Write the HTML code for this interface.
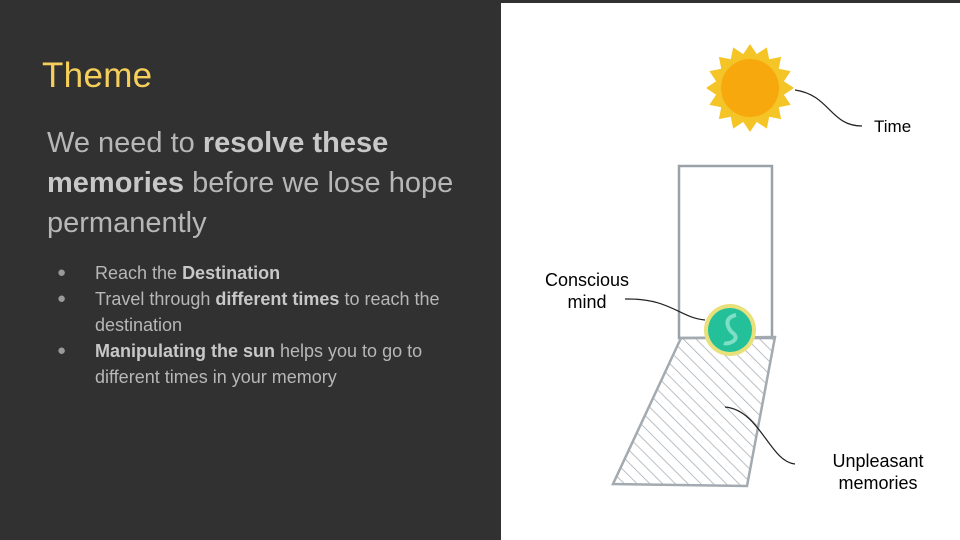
<!DOCTYPE html>
<html><head><meta charset="utf-8"><style>
html,body{margin:0;padding:0}
body{width:960px;height:540px;position:relative;overflow:hidden;background:#fff;font-family:"Liberation Sans",sans-serif}
.left{position:absolute;left:0;top:0;width:501px;height:540px;background:#313131}
.top{position:absolute;left:0;top:0;width:960px;height:3px;background:#313131}
h1{position:absolute;left:42px;top:56px;margin:0;font-weight:normal;font-size:35px;color:#f6cf5a;letter-spacing:0.3px}
.big{position:absolute;left:47px;top:123px;width:450px;font-size:29px;line-height:40px;color:#b7b7b7}
.big b{color:#c8c8c8}
ul{position:absolute;left:47px;top:260px;margin:0;padding:0;list-style:none;width:420px;font-size:18px;line-height:26px;color:#b7b7b7}
li{position:relative;padding-left:48px}
li:before{content:"●";position:absolute;left:10px;font-size:15px;color:#9a9a9a}
li b{color:#c8c8c8}
.lbl{position:absolute;font-size:17px;line-height:22px;color:#000;text-align:center}
</style></head><body>
<div class="left"></div><div class="top"></div>
<h1>Theme</h1>
<div class="big">We need to <b>resolve these memories</b> before we lose hope permanently</div>
<ul>
<li>Reach the <b>Destination</b></li>
<li>Travel through <b>different times</b> to reach the destination</li>
<li><b>Manipulating the sun</b> helps you to go to different times in your memory</li>
</ul>
<svg style="position:absolute;left:0;top:0" width="960" height="540">
<defs>
<pattern id="h" width="9" height="9" patternUnits="userSpaceOnUse" patternTransform="rotate(-45)">
<line x1="0" y1="0" x2="0" y2="9" stroke="#a9b0b6" stroke-width="1.6"/>
</pattern>
</defs>
<g transform="translate(750,88)" fill="#f5c426">
<circle r="34"/>
<polygon points="0,-44 -10,-29 10,-29"/>
<polygon points="0,-44 -10,-29 10,-29" transform="rotate(22.5)"/>
<polygon points="0,-44 -10,-29 10,-29" transform="rotate(45)"/>
<polygon points="0,-44 -10,-29 10,-29" transform="rotate(67.5)"/>
<polygon points="0,-44 -10,-29 10,-29" transform="rotate(90)"/>
<polygon points="0,-44 -10,-29 10,-29" transform="rotate(112.5)"/>
<polygon points="0,-44 -10,-29 10,-29" transform="rotate(135)"/>
<polygon points="0,-44 -10,-29 10,-29" transform="rotate(157.5)"/>
<polygon points="0,-44 -10,-29 10,-29" transform="rotate(180)"/>
<polygon points="0,-44 -10,-29 10,-29" transform="rotate(202.5)"/>
<polygon points="0,-44 -10,-29 10,-29" transform="rotate(225)"/>
<polygon points="0,-44 -10,-29 10,-29" transform="rotate(247.5)"/>
<polygon points="0,-44 -10,-29 10,-29" transform="rotate(270)"/>
<polygon points="0,-44 -10,-29 10,-29" transform="rotate(292.5)"/>
<polygon points="0,-44 -10,-29 10,-29" transform="rotate(315)"/>
<polygon points="0,-44 -10,-29 10,-29" transform="rotate(337.5)"/>
<circle r="29" fill="#f6a80d"/>
</g>
<path d="M795,90 C830,95 830,126 862,126" fill="none" stroke="#222" stroke-width="1.2"/>
<rect x="679" y="166" width="93" height="172" fill="none" stroke="#9aa1a8" stroke-width="2.5"/>
<polygon points="681,338 775,337 747,486 613,484" fill="url(#h)" stroke="#a3aab0" stroke-width="2.5"/>
<circle cx="730" cy="330" r="26" fill="#e8e07a"/>
<circle cx="730" cy="330" r="22" fill="#23c09a"/>
<path d="M736,315 C722,318 728,330 734,334 C740,340 728,345 724,343" fill="none" stroke="#7fdfc6" stroke-width="4"/>
<path d="M625,299 C670,298 680,318 705,320" fill="none" stroke="#222" stroke-width="1.2"/>
<path d="M725,407 C760,410 770,462 795,464" fill="none" stroke="#222" stroke-width="1.2"/>
</svg>
<div class="lbl" style="left:874px;top:116px">Time</div>
<div class="lbl" style="left:533px;top:269px;width:108px;font-size:18px">Conscious<br>mind</div>
<div class="lbl" style="left:818px;top:450px;width:120px;font-size:18px">Unpleasant<br>memories</div>
</body></html>
